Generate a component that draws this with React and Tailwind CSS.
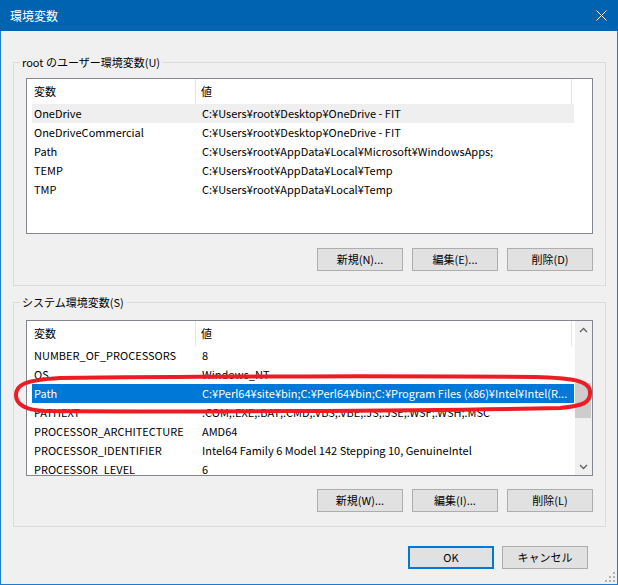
import React from 'react'

const userVars = [
  ['OneDrive', 'C:¥Users¥root¥Desktop¥OneDrive - FIT'],
  ['OneDriveCommercial', 'C:¥Users¥root¥Desktop¥OneDrive - FIT'],
  ['Path', 'C:¥Users¥root¥AppData¥Local¥Microsoft¥WindowsApps;'],
  ['TEMP', 'C:¥Users¥root¥AppData¥Local¥Temp'],
  ['TMP', 'C:¥Users¥root¥AppData¥Local¥Temp'],
]

const systemVars = [
  ['NUMBER_OF_PROCESSORS', '8'],
  ['OS', 'Windows_NT'],
  ['Path', 'C:¥Perl64¥site¥bin;C:¥Perl64¥bin;C:¥Program Files (x86)¥Intel¥Intel(R...'],
  ['PATHEXT', '.COM;.EXE;.BAT;.CMD;.VBS;.VBE;.JS;.JSE;.WSF;.WSH;.MSC'],
  ['PROCESSOR_ARCHITECTURE', 'AMD64'],
  ['PROCESSOR_IDENTIFIER', 'Intel64 Family 6 Model 142 Stepping 10, GenuineIntel'],
  ['PROCESSOR_LEVEL', '6'],
]

function Btn({ children, primary }) {
  return (
    <button
      className={
        primary
          ? 'w-[86px] h-[23px] bg-[#e1e1e1] border-2 border-[#0078d7] text-[11px] leading-none text-black'
          : 'w-[86px] h-[23px] bg-[#e1e1e1] border border-[#adadad] text-[11px] leading-none text-black'
      }
    >
      {children}
    </button>
  )
}

function Header() {
  return (
    <div className="flex h-[25px] bg-white text-[11px] leading-[25px] shrink-0">
      <div className="w-[169px] pl-[7px] border-r border-[#e5e5e5]">変数</div>
      <div className="w-[376px] pl-[5px] border-r border-[#e5e5e5]">値</div>
    </div>
  )
}

function Row({ name, value, state }) {
  let cls = 'flex shrink-0 ml-[5px] w-[542px] h-[19px] leading-[19px] text-[11px] whitespace-nowrap overflow-hidden'
  if (state === 'sel') cls += ' bg-[#0078d7] text-white'
  else if (state === 'hover') cls += ' bg-[#efefef] text-black'
  else cls += ' text-black'
  return (
    <div className={cls}>
      <div className="w-[170px] pl-[2px] shrink-0">{name}</div>
      <div className="overflow-hidden">{value}</div>
    </div>
  )
}

function ScrollBar() {
  return (
    <div className="w-[17px] bg-[#f0f0f0] flex flex-col shrink-0">
      <div className="h-[17px] flex items-center justify-center">
        <svg width="9" height="6" viewBox="0 0 9 6">
          <path d="M1 5 L4.5 1.5 L8 5" fill="none" stroke="#606060" strokeWidth="1.3" />
        </svg>
      </div>
      <div className="flex-1">
        <div className="mt-[45px] h-[35px] mr-[1px] bg-[#cdcdcd]" />
      </div>
      <div className="h-[17px] flex items-center justify-center">
        <svg width="9" height="6" viewBox="0 0 9 6">
          <path d="M1 1 L4.5 4.5 L8 1" fill="none" stroke="#606060" strokeWidth="1.3" />
        </svg>
      </div>
    </div>
  )
}

export default function App() {
  const font = { fontFamily: '"Noto Sans CJK JP", "Noto Sans", sans-serif' }
  return (
    <div className="relative w-[618px] h-[585px] bg-[#f0f0f0] text-black" style={font}>
      {/* title bar */}
      <div className="h-[31px] bg-[#0063b1] flex items-center justify-between pl-[10px] pr-[11px]">
        <span className="text-white text-[12px]">環境変数</span>
        <svg width="11" height="11" viewBox="0 0 11 11">
          <path d="M0.5 0.5 L10.5 10.5 M10.5 0.5 L0.5 10.5" stroke="#fff" strokeWidth="1" />
        </svg>
      </div>

      <div className="h-[554px] border-x border-b border-[#1c7bd0] pt-[23px]">
        {/* user vars */}
        <fieldset className="ml-[12px] w-[593px] border border-[#dcdcdc] p-0 pb-[14px]">
          <legend className="ml-[6px] px-[2px] text-[11px] leading-[16px]">root のユーザー環境変数(U)</legend>
          <div className="mt-[8px] ml-[12px] w-[567px] h-[156px] border border-[#828790] bg-white overflow-hidden">
            <Header />
            {userVars.map(([n, v], i) => (
              <Row key={n} name={n} value={v} state={i === 0 ? 'hover' : ''} />
            ))}
          </div>
          <div className="mt-[14px] pr-[12px] flex justify-end gap-[9px]">
            <Btn>新規(N)...</Btn>
            <Btn>編集(E)...</Btn>
            <Btn>削除(D)</Btn>
          </div>
        </fieldset>

        {/* system vars */}
        <fieldset className="mt-[8px] ml-[12px] w-[593px] border border-[#dcdcdc] p-0 pb-[14px]">
          <legend className="ml-[6px] px-[2px] text-[11px] leading-[16px]">システム環境変数(S)</legend>
          <div className="mt-[10px] ml-[12px] w-[567px] h-[156px] border border-[#828790] bg-white overflow-hidden flex">
            <div className="flex-1 flex flex-col overflow-hidden">
              <Header />
              {systemVars.map(([n, v]) => (
                <Row key={n} name={n} value={v} state={n === 'Path' ? 'sel' : ''} />
              ))}
            </div>
            <ScrollBar />
          </div>
          <div className="mt-[13px] pr-[12px] flex justify-end gap-[9px]">
            <Btn>新規(W)...</Btn>
            <Btn>編集(I)...</Btn>
            <Btn>削除(L)</Btn>
          </div>
        </fieldset>

        <div className="mt-[19px] mr-[29px] flex justify-end gap-[8px]">
          <Btn primary>OK</Btn>
          <Btn>キャンセル</Btn>
        </div>
      </div>

      {/* size grip */}
      <svg className="absolute right-[3px] bottom-[3px]" width="10" height="10" viewBox="0 0 10 10">
        <g fill="#b4b4b4">
          <rect x="8" y="0" width="2" height="2" />
          <rect x="4" y="4" width="2" height="2" />
          <rect x="8" y="4" width="2" height="2" />
          <rect x="0" y="8" width="2" height="2" />
          <rect x="4" y="8" width="2" height="2" />
          <rect x="8" y="8" width="2" height="2" />
        </g>
      </svg>

      {/* red marker around the selected Path row */}
      <svg className="absolute left-0 top-0 pointer-events-none" width="618" height="585" viewBox="0 0 618 585">
        <path
          d="M60 378 C200 376 420 376 535 377 C570 378 590 380 590 392 C591 403 582 406 560 408 C420 411 160 412 45 411 C24 410 16 404 16 395 C16 385 24 380 60 378 Z"
          fill="none"
          stroke="#ed1c24"
          strokeWidth="4"
        />
      </svg>
    </div>
  )
}
